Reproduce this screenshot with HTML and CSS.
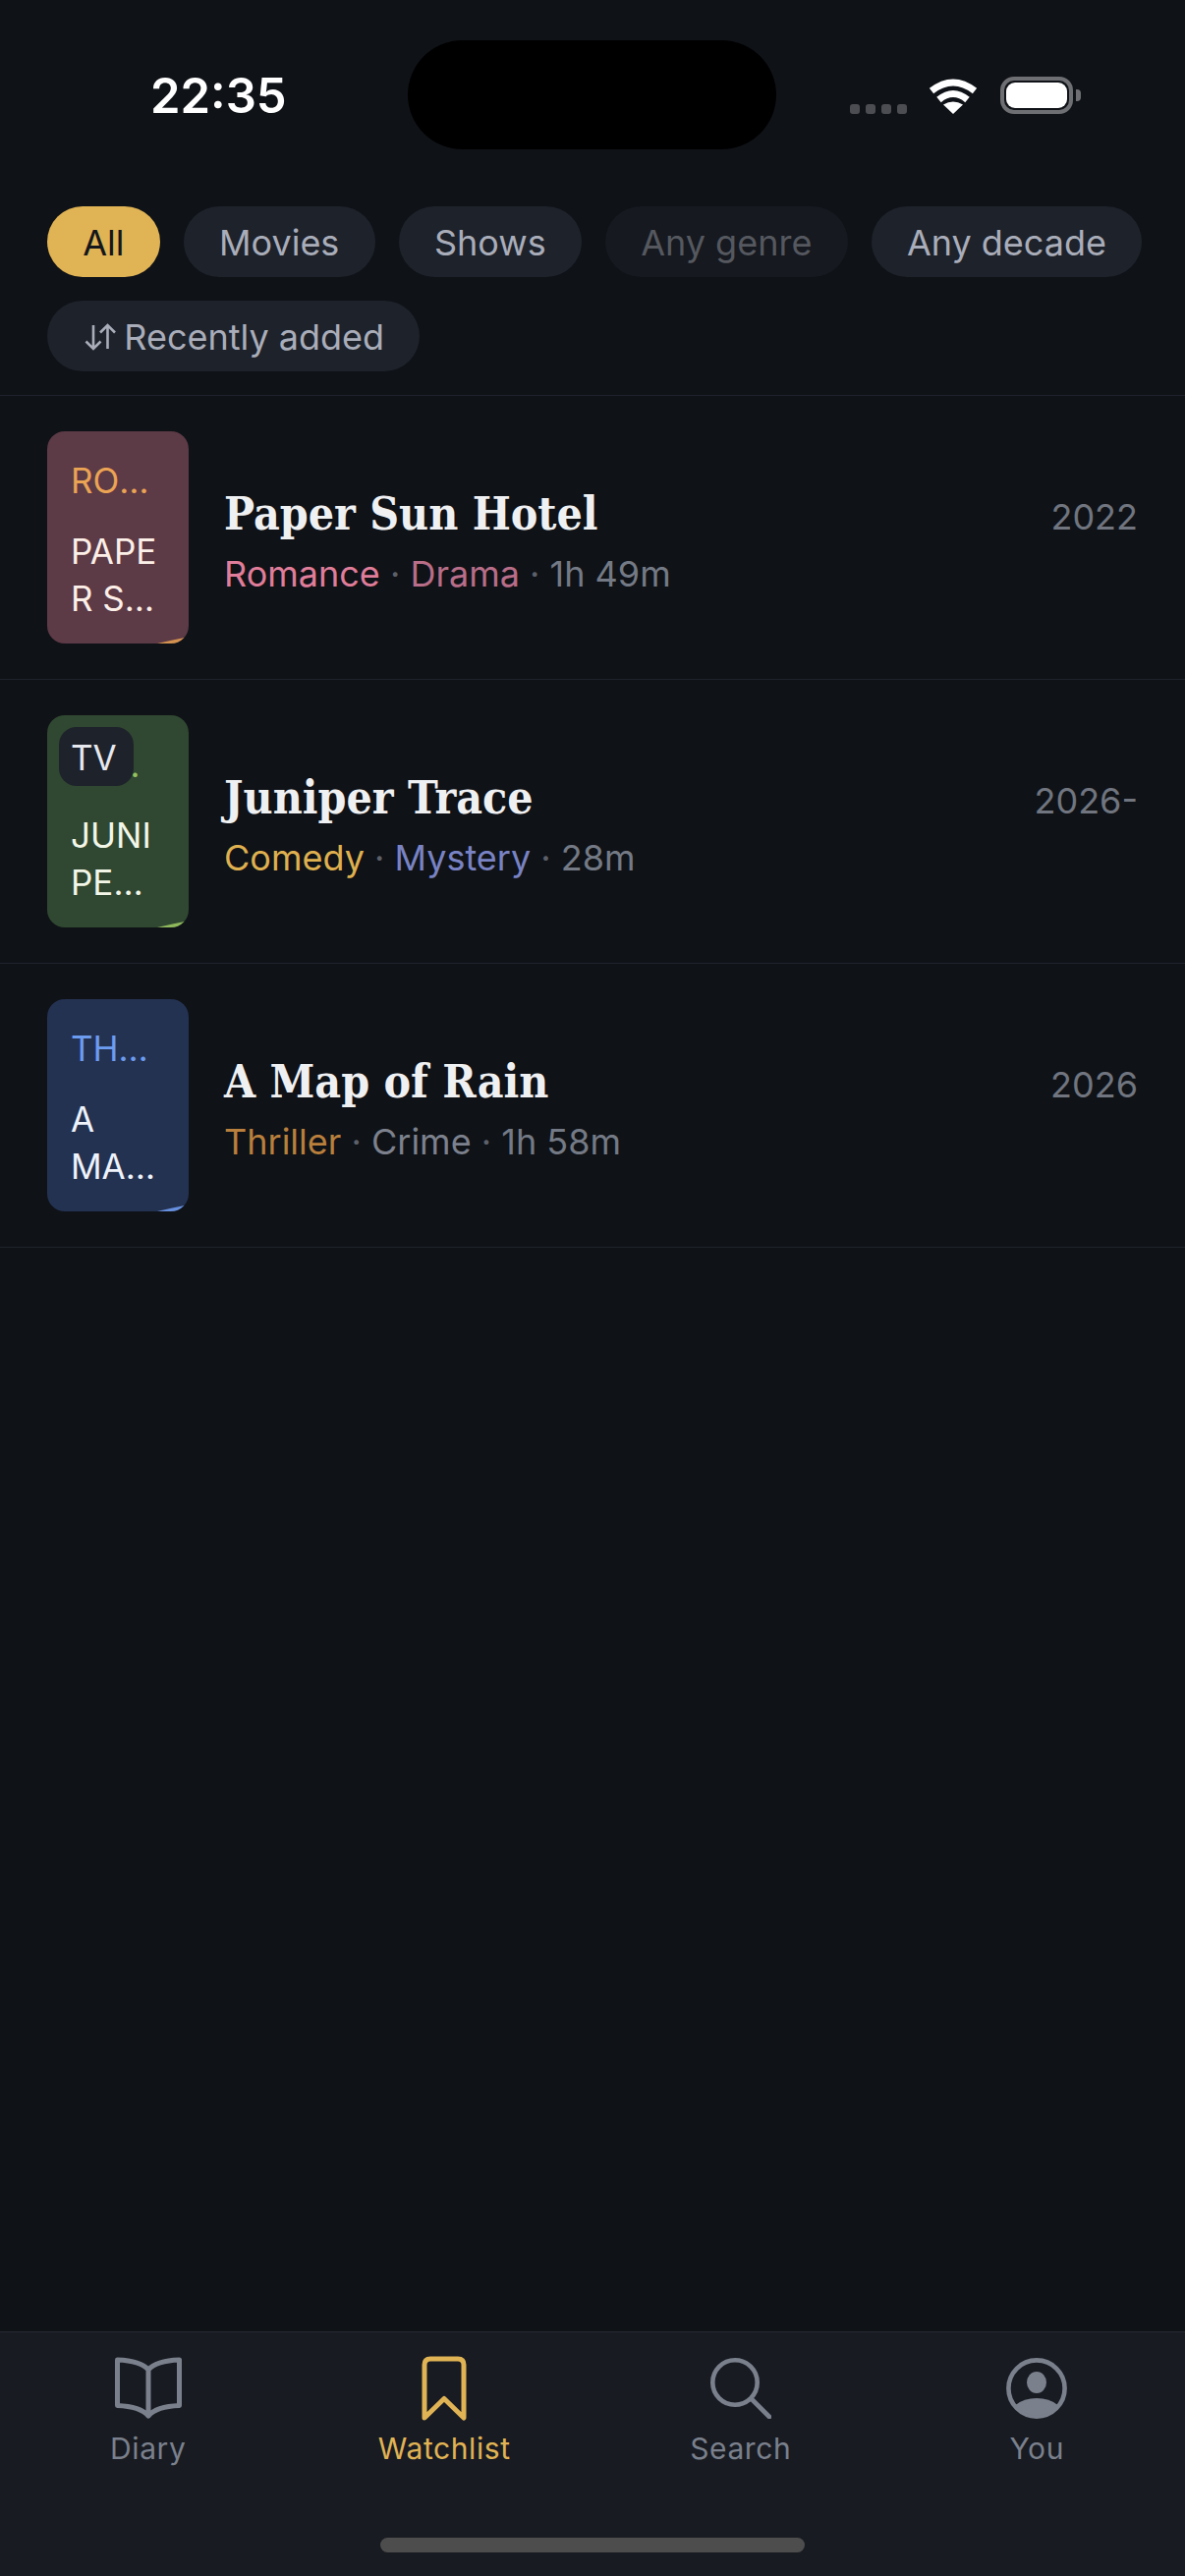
FILE: index.html
```html
<!DOCTYPE html>
<html lang="en">
<head>
  <meta charset="UTF-8">
  <title>Watchlist</title>
  <link rel="stylesheet" href="styles.css">
</head>
<body>
  <header class="status-bar">
    <div class="time">22:35</div>
    <div class="island"></div>
    <div class="status-icons">
      <div class="signal"><i></i><i></i><i></i><i></i></div>
      <svg class="wifi" width="50" height="37" viewBox="0 0 50 37">
        <path d="M3 13.5 Q25 -3.5 47 13.5" fill="none" stroke="#fff" stroke-width="7"/>
        <path d="M10.5 22.5 Q25 10.5 39.5 22.5" fill="none" stroke="#fff" stroke-width="7"/>
        <path d="M25 37 L15 27.5 Q25 21.5 35 27.5 Z" fill="#fff"/>
      </svg>
      <div class="battery"><div class="battery-fill"></div></div>
      <div class="battery-cap"></div>
    </div>
  </header>

  <section class="filters">
    <button class="chip active">All</button>
    <button class="chip">Movies</button>
    <button class="chip">Shows</button>
    <button class="chip disabled">Any genre</button>
    <button class="chip">Any decade</button>
    <button class="chip sort">
      <svg width="32" height="28" viewBox="0 0 32 28" fill="none" stroke="#a9adb9" stroke-width="2.6">
        <path d="M9 2 V26 M1.5 18.5 L9 26 L16.5 18.5"/>
        <path d="M23.5 26 V2 M16 9.5 L23.5 2 L31 9.5"/>
      </svg>
      Recently added
    </button>
  </section>

  <main class="list">
    <article class="row">
      <div class="poster poster-rose">
        <div class="poster-genre">ROMANCE</div>
        <div class="poster-title">PAPER SUN HOTEL</div>
        <span class="poster-fold"></span>
      </div>
      <div class="info">
        <div class="title-line">
          <h2>Paper Sun Hotel</h2>
          <span class="year">2022</span>
        </div>
        <p class="meta"><span class="g-romance">Romance</span> <b>·</b> <span class="g-drama">Drama</span> <b>·</b> 1h 49m</p>
      </div>
    </article>

    <article class="row">
      <div class="poster poster-green">
        <div class="poster-genre">COMEDY</div>
        <div class="poster-title">JUNIPER TRACE</div>
        <span class="poster-fold"></span>
        <span class="badge">TV</span>
      </div>
      <div class="info">
        <div class="title-line">
          <h2>Juniper Trace</h2>
          <span class="year">2026-</span>
        </div>
        <p class="meta"><span class="g-comedy">Comedy</span> <b>·</b> <span class="g-mystery">Mystery</span> <b>·</b> 28m</p>
      </div>
    </article>

    <article class="row">
      <div class="poster poster-blue">
        <div class="poster-genre">THRILLER</div>
        <div class="poster-title">A MAP OF RAIN</div>
        <span class="poster-fold"></span>
      </div>
      <div class="info">
        <div class="title-line">
          <h2>A Map of Rain</h2>
          <span class="year">2026</span>
        </div>
        <p class="meta"><span class="g-thriller">Thriller</span> <b>·</b> <span class="g-crime">Crime</span> <b>·</b> 1h 58m</p>
      </div>
    </article>
  </main>

  <nav class="tabbar">
    <div class="tabs">
      <a class="tab" href="#">
        <span class="tab-icon">
          <svg width="72" height="64" viewBox="0 0 72 64" fill="none" stroke="#7a808c" stroke-width="5" stroke-linejoin="round">
            <path d="M36 13 C30 6 18 3.5 4.5 3 V49.5 C18 50 30 53 36 60 C42 53 54 50 67.5 49.5 V3 C54 3.5 42 6 36 13 Z M36 13 V60"/>
          </svg>
        </span>
        Diary
      </a>
      <a class="tab tab-active" href="#">
        <span class="tab-icon">
          <svg width="46" height="66" viewBox="0 0 46 66" fill="none" stroke="#e0b354" stroke-width="5" stroke-linejoin="round">
            <path d="M3 63 L23 43.5 L43 63 V9 Q43 3 37 3 H9 Q3 3 3 9 Z"/>
          </svg>
        </span>
        Watchlist
      </a>
      <a class="tab" href="#">
        <span class="tab-icon">
          <svg width="62" height="62" viewBox="0 0 62 62" fill="none" stroke="#7a808c" stroke-width="4.6" stroke-linecap="round">
            <circle cx="25" cy="25" r="22.7"/>
            <path d="M43 43 L60 60"/>
          </svg>
        </span>
        Search
      </a>
      <a class="tab" href="#">
        <span class="tab-icon">
          <svg width="62" height="62" viewBox="0 0 62 62" fill="#7a808c">
            <circle cx="31" cy="31" r="28.6" fill="none" stroke="#7a808c" stroke-width="4.6"/>
            <ellipse cx="31" cy="25" rx="10" ry="11"/>
            <path d="M9.5 48 Q18 41 31 41 Q44 41 52.5 48 A27 27 0 0 1 9.5 48 Z"/>
          </svg>
        </span>
        You
      </a>
    </div>
    <div class="home-indicator"></div>
  </nav>
</body>
</html>
```

FILE: styles.css
```css
* {
  box-sizing: border-box;
}

body {
  background-color: #0f1217;
  font-family: Inter, "Liberation Sans", sans-serif;
  margin: 0;
  height: 2622px;
  display: flex;
  flex-direction: column;
  overflow: hidden;
}

/* status bar */

.status-bar {
  height: 210px;
  padding-top: 41px;
  display: grid;
  grid-template-columns: 415px 375px 1fr;
  align-items: start;
}

.time {
  color: white;
  font-size: 49px;
  font-weight: 600;
  line-height: 60px;
  padding: 27px 0 0 153px;
}

.island {
  height: 111px;
  background-color: black;
  border-radius: 56px;
}

.status-icons {
  display: flex;
  align-items: flex-end;
  padding: 37px 0 0 75px;
}

.signal {
  display: flex;
  gap: 6px;
  margin-right: 22px;
}

.signal i {
  width: 10px;
  height: 10px;
  background-color: #4b4d52;
  border-radius: 3px;
}

.wifi {
  margin-right: 23px;
}

.battery {
  width: 74px;
  height: 38px;
  border: 4px solid #6e6f73;
  border-radius: 14px;
  padding: 2px;
}

.battery-fill {
  height: 100%;
  background-color: white;
  border-radius: 9px;
}

.battery-cap {
  width: 5px;
  height: 12px;
  margin: 0 0 13px 3px;
  background-color: #6e6f73;
  border-radius: 0 4px 4px 0;
}

/* filters */

.filters {
  display: flex;
  flex-wrap: wrap;
  gap: 24px;
  padding: 0 30px 24px 48px;
  border-bottom: 1px solid #1e222b;
}

.chip {
  height: 72px;
  padding: 2px 36.25px 0;
  border: none;
  border-radius: 36px;
  background-color: #1e222b;
  color: #a9adb9;
  font-family: inherit;
  font-size: 36px;
  display: flex;
  align-items: center;
}

.chip.active {
  background-color: #e0b354;
  color: #14161b;
}

.chip.disabled {
  background-color: #16191f;
  color: #55585f;
}

.chip.sort svg {
  margin: 0 8px 0 2px;
}

/* list */

.list {
  flex: 1;
}

.row {
  display: flex;
  align-items: center;
  gap: 36px;
  padding: 36px 48px;
  border-bottom: 1px solid #1e222b;
}

.poster {
  position: relative;
  flex: none;
  width: 144px;
  height: 216px;
  padding: 28px 24px;
  border-radius: 18px;
  overflow: hidden;
}

.poster-rose {
  background-color: #5c3a46;
  color: #fcefe8;
}

.poster-green {
  background-color: #304831;
  color: #f2f6e8;
}

.poster-blue {
  background-color: #243252;
  color: #eef2fb;
}

.poster-genre {
  font-size: 35px;
  line-height: 44px;
  white-space: nowrap;
  overflow: hidden;
  text-overflow: ellipsis;
  margin-bottom: 26px;
}

.poster-rose .poster-genre {
  color: #eba354;
}

.poster-green .poster-genre {
  color: #93c060;
  margin-left: -12px;
}

.poster-blue .poster-genre {
  color: #6c9cf0;
}

.poster-title {
  font-size: 35px;
  line-height: 48px;
  word-break: break-all;
  display: -webkit-box;
  -webkit-box-orient: vertical;
  -webkit-line-clamp: 2;
  overflow: hidden;
}

.poster-blue .poster-title {
  word-break: normal;
  overflow-wrap: anywhere;
}

.poster-fold {
  position: absolute;
  right: 0;
  bottom: 0;
  width: 32px;
  height: 7px;
  clip-path: polygon(0 100%, 45% 55%, 100% 0, 100% 100%);
}

.poster-rose .poster-fold {
  background-color: #d2914f;
}

.poster-green .poster-fold {
  background-color: #8fb85c;
}

.poster-blue .poster-fold {
  background-color: #6690de;
}

.badge {
  position: absolute;
  top: 12px;
  left: 12px;
  width: 76px;
  height: 60px;
  padding-left: 12px;
  line-height: 62px;
  font-size: 35px;
  color: #e6e8ee;
  background-color: #1e222b;
  border-radius: 18px;
}

.info {
  flex: 1;
  padding-top: 5px;
}

.title-line {
  display: flex;
  justify-content: space-between;
  align-items: flex-start;
}

h2 {
  margin: 0;
  color: #eff0f2;
  font-family: "DejaVu Serif Condensed", "Liberation Serif", serif;
  font-size: 46px;
  font-weight: bold;
  line-height: 64px;
}

.year {
  color: #70757f;
  font-size: 36px;
  padding-top: 13px;
}

.meta {
  margin: 5px 0 0;
  color: #747a85;
  font-size: 36px;
  line-height: 48px;
}

.meta b {
  color: #5c606a;
  font-weight: normal;
}

.g-romance {
  color: #e07d9a;
}

.g-drama {
  color: #b86d88;
}

.g-comedy {
  color: #dfb04f;
}

.g-mystery {
  color: #7983c4;
}

.g-thriller {
  color: #b97f3c;
}

.g-crime {
  color: #7c818d;
}

/* tab bar */

.tabbar {
  height: 249px;
  display: flex;
  flex-direction: column;
  align-items: center;
  background-color: #181b22;
  border-top: 1px solid #262a32;
}

.tabs {
  width: 100%;
  display: grid;
  grid-template-columns: repeat(4, 1fr);
  padding-top: 24px;
}

.tab {
  display: flex;
  flex-direction: column;
  align-items: center;
  gap: 8px;
  color: #7a808c;
  font-size: 30px;
  line-height: 40px;
  letter-spacing: 0.6px;
  text-decoration: none;
}

.tab-active {
  color: #e0b354;
}

.tab-icon {
  height: 66px;
  display: flex;
  align-items: center;
}

.home-indicator {
  width: 432px;
  height: 15px;
  margin-top: auto;
  margin-bottom: 24px;
  background-color: #4d4d4d;
  border-radius: 8px;
}
```
